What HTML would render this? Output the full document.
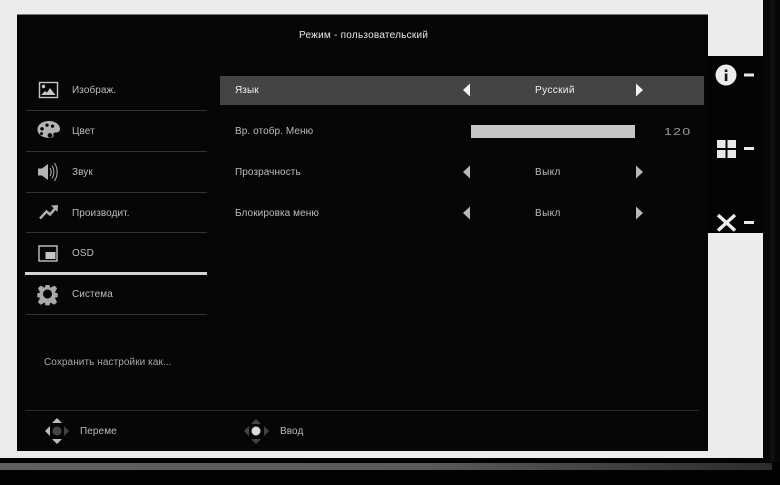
<!DOCTYPE html>
<html><head><meta charset="utf-8">
<style>
html,body{margin:0;padding:0;background:#000}
#p{position:relative;width:780px;height:485px;overflow:hidden;background:#030303;font-family:"Liberation Sans",sans-serif}
#p div{position:absolute}
.t{font-size:10px;line-height:12px;color:#bcbcbc;white-space:nowrap;letter-spacing:.08px;margin-top:1px;transform:translateY(-50%);filter:blur(.25px)}
.l{left:26px;width:181px;height:1px;background:#333}
svg{position:absolute;left:0;top:0;filter:blur(.3px)}
</style></head><body>
<div id="p">
<div style="left:763px;top:0;width:17px;height:462px;background:#070707"></div>
<div style="left:770px;top:0;width:5px;height:462px;background:#101010"></div>
<div style="left:0;top:0;width:763px;height:458px;background:#ececec"></div>
<div style="left:0;top:463px;width:772px;height:7px;background:linear-gradient(90deg,#5f5f5f,#5a5a5a 55%,#3a3a3a 85%,#2c2c2c)"></div>
<div style="left:17px;top:15px;width:691px;height:436px;background:#060606;box-shadow:0 -1px 0 #777"></div>
<div style="left:708px;top:56px;width:55px;height:177px;background:#040404"></div>

<div style="left:220px;top:76px;width:484px;height:29px;background:#444"></div>
<div style="left:471px;top:125px;width:164px;height:13px;background:#c6c6c6"></div>

<div class="l" style="top:110px"></div>
<div class="l" style="top:151px"></div>
<div class="l" style="top:192px"></div>
<div class="l" style="top:232px"></div>
<div class="l" style="left:25px;width:182px;top:272px;height:3px;background:#d4d4d4"></div>
<div class="l" style="top:314px"></div>
<div style="left:25px;top:410px;width:674px;height:1px;background:#2c2c2c"></div>

<div class="t" style="left:299px;top:35px;color:#e8e8e8;letter-spacing:.24px">Режим - пользовательский</div>
<div class="t" style="left:72px;top:90px">Изображ.</div>
<div class="t" style="left:72px;top:131px">Цвет</div>
<div class="t" style="left:72px;top:172px">Звук</div>
<div class="t" style="left:72px;top:213px">Производит.</div>
<div class="t" style="left:72px;top:253px">OSD</div>
<div class="t" style="left:72px;top:294px">Система</div>
<div class="t" style="left:44px;top:362px;color:#a8a8a8">Сохранить настройки как...</div>
<div class="t" style="left:80px;top:431px">Переме</div>
<div class="t" style="left:280px;top:431px">Ввод</div>

<div class="t" style="left:235px;top:90px;color:#f0f0f0">Язык</div>
<div class="t" style="left:235px;top:131px">Вр. отобр. Меню</div>
<div class="t" style="left:235px;top:172px">Прозрачность</div>
<div class="t" style="left:235px;top:213px">Блокировка меню</div>
<div class="t" style="left:535px;top:90px;color:#f0f0f0;letter-spacing:.4px">Русский</div>
<div class="t" style="left:535px;top:172px;letter-spacing:.4px">Выкл</div>
<div class="t" style="left:535px;top:213px;letter-spacing:.4px">Выкл</div>
<div class="t" style="left:664px;top:131px;font-size:10.5px;letter-spacing:.9px;color:#9c9c9c;transform-origin:left center;transform:translateY(-50%) scaleX(1.35)">120</div>

<svg width="780" height="485" viewBox="0 0 780 485">
 <!-- row arrows -->
 <g fill="#f2f2f2"><path d="M470 83.500v13l-7-6.500z"/><path d="M636 83.500v13l7-6.500z"/></g>
 <g fill="#b8b8b8"><path d="M470 165.500v13l-7-6.500z"/><path d="M636 165.500v13l7-6.500z"/><path d="M470 206.500v13l-7-6.500z"/><path d="M636 206.500v13l7-6.500z"/></g>

 <!-- image icon -->
 <rect x="39.500" y="82.500" width="18" height="15" fill="none" stroke="#c4c4c4" stroke-width="1.400"/>
 <circle cx="43.500" cy="86.500" r="1.700" fill="#c4c4c4"/>
 <path d="M41 95l4-4 2 1.500 3-4.500 5.500 7z" fill="#c4c4c4"/>
 <!-- palette -->
 <path fill="#b4b4b4" fill-rule="evenodd" d="M49 121c6 0 11 3.500 11 8 0 3-2.500 3.500-4.500 3.500-2 0-2.500 1-2 2.500.4 1.500-.5 3-3.500 3-6.500 0-12.500-3-12.500-8.500 0-5 5-8.500 11.500-8.500zM47 123.500a1.700 1.700 0 1 0 .01 0zM52.500 124.500a1.700 1.700 0 1 0 .01 0zM42 127a1.800 1.800 0 1 0 .01 0zM41.500 132a1.600 1.600 0 1 0 .01 0zM50 133a2.400 2.400 0 1 0 .01 0z"/>
 <!-- speaker -->
 <path fill="#b4b4b4" d="M38 168.500h4l6-4.500v16l-6-4.500h-4z"/>
 <g fill="none" stroke="#b4b4b4" stroke-width="1"><path d="M50 168c1.500 2.500 1.500 5.500 0 8"/><path d="M52 165.500c2.500 4 2.500 9 0 13"/><path d="M54.500 163c3.500 5.500 3.500 12.500 0 18"/></g>
 <!-- chart -->
 <path fill="none" stroke="#b0b0b0" stroke-width="2.500" d="M40 218.500l6.500-7 3.500 3 6-7"/>
 <path fill="#b0b0b0" d="M51 205.500l7-.5-.5 7z"/>
 <!-- OSD -->
 <rect x="39" y="246" width="18" height="15" fill="none" stroke="#c4c4c4" stroke-width="1.400"/>
 <rect x="45.500" y="252" width="10" height="7" fill="#c4c4c4"/>
 <!-- gear -->
 <g fill="#a8a8a8"><path fill-rule="evenodd" d="M45.500 285h4l.6 2.800 2-.9 2.300-1.300 2.700 2.700-1.300 2.300-.9 2 2.800.6v4l-2.800.6.9 2 1.300 2.300-2.700 2.700-2.300-1.300-2-.9-.6 2.800h-4l-.6-2.800-2 .9-2.300 1.300-2.700-2.700 1.300-2.300.9-2-2.800-.6v-4l2.800-.6-.9-2-1.300-2.300 2.700-2.700 2.300 1.300 2 .9zM47.500 289.500a4.500 4.500 0 1 0 .01 0z"/></g>

 <!-- side icons -->
 <circle cx="726" cy="75" r="10.500" fill="#ececec"/>
 <rect x="724.800" y="73.500" width="2.600" height="7.500" fill="#151515"/>
 <rect x="724.800" y="69.500" width="2.600" height="2.500" fill="#151515"/>
 <g fill="#e8e8e8">
  <rect x="717" y="140" width="8.500" height="8"/><rect x="727.500" y="140" width="8.500" height="8"/>
  <rect x="717" y="150" width="8.500" height="8"/><rect x="727.500" y="150" width="8.500" height="8"/>
  <rect x="744" y="73.500" width="10" height="3"/><rect x="744" y="147" width="10" height="3"/><rect x="744" y="221" width="10" height="3"/>
 </g>
 <path d="M718 215l17 15.500M735 215l-17 15.500" stroke="#eee" stroke-width="3.400" fill="none"/>

 <!-- nav pads -->
 <circle cx="57" cy="431" r="4.500" fill="#444"/>
 <g fill="#bcbcbc"><path d="M52 423l5-5 5 5z"/><path d="M52 439l5 5 5-5z"/><path d="M50 426v10l-5-5z"/></g>
 <path d="M64 426v10l5-5z" fill="#444"/>
 <circle cx="256" cy="431" r="4.500" fill="#dcdcdc"/>
 <g fill="#444"><path d="M251 424l5-5 5 5z"/><path d="M251 439l5 5 5-5z"/><path d="M249 426v10l-5-5z"/><path d="M264 426v10l5-5z"/></g>
</svg>
</div>
</body></html>
